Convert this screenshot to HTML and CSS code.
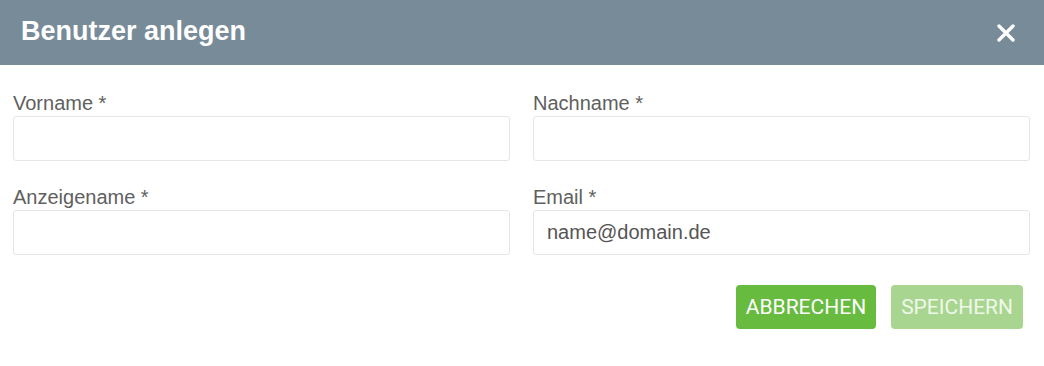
FILE: index.html
```html
<!DOCTYPE html>
<html lang="de">
<head>
    <meta charset="UTF-8">
    <meta name="viewport" content="width=device-width, initial-scale=1.0">
    <title>Benutzer anlegen</title>
    <link rel="stylesheet" href="styles.css">
</head>
<body>

    <div class="dialog">
        <div class="dialog-header">
            <h1 class="dialog-title">Benutzer anlegen</h1>
            <button class="close-btn" aria-label="Schließen">
                <svg width="18" height="18" viewBox="0 0 18 18">
                    <path d="M2 2 L16 16 M16 2 L2 16" stroke="#fff" stroke-width="3.4" stroke-linecap="round"/>
                </svg>
            </button>
        </div>

        <form class="dialog-body">
            <div class="form-grid">
                <div class="field">
                    <label class="field-label">Vorname *</label>
                    <input type="text" class="field-input">
                </div>
                <div class="field">
                    <label class="field-label">Nachname *</label>
                    <input type="text" class="field-input">
                </div>
                <div class="field">
                    <label class="field-label">Anzeigename *</label>
                    <input type="text" class="field-input">
                </div>
                <div class="field">
                    <label class="field-label">Email *</label>
                    <input type="text" class="field-input" value="name@domain.de">
                </div>
            </div>

            <div class="actions">
                <button type="button" class="btn">Abbrechen</button>
                <button type="button" class="btn btn-disabled" disabled>Speichern</button>
            </div>
        </form>
    </div>

</body>
</html>
```

FILE: styles.css
```css
body {
    margin: 0;
    font-family: "Liberation Sans", Arial, sans-serif;
    background-color: #fff;
}
.dialog-header {
    height: 65px;
    background-color: #778b99;
    display: flex;
    align-items: center;
    padding: 0 20px 0 21px;
}
.dialog-title {
    margin: 0;
    color: #fff;
    font-size: 27px;
    font-weight: bold;
    flex: 1;
    position: relative;
    top: -1px;
}
.close-btn {
    background: none;
    border: none;
    padding: 0;
    width: 18px;
    height: 18px;
    margin-right: 9px;
    cursor: pointer;
    display: flex;
}
.dialog-body {
    padding: 26px 14px 0 13px;
}
.form-grid {
    display: grid;
    grid-template-columns: 1fr 1fr;
    column-gap: 23px;
    row-gap: 24px;
}
.field {
    display: flex;
    flex-direction: column;
}
.field-label {
    font-size: 20px;
    line-height: 24px;
    color: #606060;
    margin-bottom: 1px;
}
.field-input {
    height: 45px;
    box-sizing: border-box;
    border: 1px solid #e6e6e6;
    border-radius: 3px;
    padding: 0 13px;
    font-family: "Liberation Sans", Arial, sans-serif;
    font-size: 20px;
    color: #555;
    outline: none;
}
.actions {
    display: flex;
    justify-content: flex-end;
    gap: 15px;
    margin-top: 30px;
    padding-right: 7px;
}
.btn {
    height: 44px;
    padding: 0 10px;
    border: none;
    border-radius: 4px;
    background-color: #67bb3f;
    color: #fff;
    font-family: Roboto, sans-serif;
    font-size: 21px;
    text-transform: uppercase;
    cursor: pointer;
}
.btn-disabled {
    background-color: #a8d590;
    color: #eef8e9;
    cursor: default;
}
```
